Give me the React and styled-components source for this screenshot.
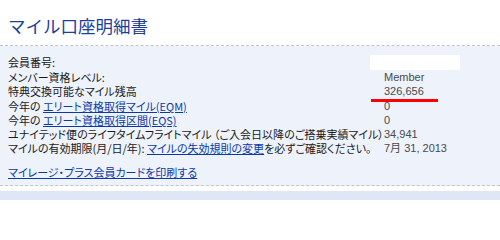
import React from 'react';
import styled, {createGlobalStyle} from 'styled-components';

const GlobalStyle = createGlobalStyle`
  html, body {
    margin: 0;
    padding: 0;
    background: #ffffff;
  }
  body {
    font-family: "Liberation Sans", "Noto Sans CJK JP", sans-serif;
  }
`;

const Page = styled.div`
  width: 500px;
  height: 200px;
  overflow: hidden;
  display: flex;
  flex-direction: column;
`;

const Title = styled.h1`
  margin: 13px 0 0;
  padding: 0 0 6px 8px;
  font-family: "Noto Sans CJK JP", sans-serif;
  font-size: 17.5px;
  font-weight: normal;
  line-height: 26px;
  color: #1c3f9c;
  border-bottom: 1px dashed #c4c4c4;
`;

const Panel = styled.section`
  background: #eef2fa;
  padding: 9px 0 6px 8px;
  border-bottom: 1px dashed #c4c4c4;
`;

const Rows = styled.div`
  display: grid;
  grid-template-columns: 362px 1fr;
`;

const Label = styled.div`
  font-family: "Noto Sans CJK JP", sans-serif;
  font-feature-settings: "palt";
  font-size: 11px;
  line-height: ${(p) => p.$h || 14}px;
  color: #1a1a1a;
  white-space: nowrap;
`;

const Value = styled.div`
  position: relative;
  font-family: "Liberation Sans", "Noto Sans CJK JP", sans-serif;
  font-size: 11px;
  line-height: ${(p) => p.$h || 14}px;
  color: #4a4a4a;
  padding-left: 14px;
  white-space: nowrap;
`;

const InputBox = styled.div`
  width: 90px;
  height: 15px;
  margin-left: -14px;
  background: #ffffff;
`;

// red annotation stroke drawn over the balance
const RedMark = styled.span`
  position: absolute;
  left: 1px;
  top: 15px;
  width: 67px;
  height: 3px;
  background: #ff0000;
`;

const A = styled.a`
  color: #0b3aa8;
  text-decoration: underline;
`;

const PrintLink = styled(A)`
  display: block;
  margin-top: 10px;
  font-family: "Noto Sans CJK JP", sans-serif;
  font-feature-settings: "palt";
  font-size: 11px;
  line-height: 14px;
`;

const Strip = styled.div`
  margin-top: 5px;
  flex: 1;
  background: #dfe7f7;
`;

const rows = [
  {label: '会員番号:', value: <InputBox />},
  {label: 'メンバー資格レベル:', value: 'Member'},
  {label: '特典交換可能なマイル残高', value: (<>326,656<RedMark /></>), h: 15},
  {label: (<>今年の <A href="#">エリート資格取得マイル(EQM)</A></>), value: '0'},
  {label: (<>今年の <A href="#">エリート資格取得区間(EQS)</A></>), value: '0'},
  {label: 'ユナイテッド便のライフタイムフライトマイル （ご入会日以降のご搭乗実績マイル）', value: '34,941'},
  {label: (<>マイルの有効期限(月/日/年): <A href="#">マイルの失効規則の変更</A>を必ずご確認ください。</>), value: '7月 31, 2013'},
];

export default function App() {
  return (
    <Page>
      <GlobalStyle />
      <Title>マイル口座明細書</Title>
      <Panel>
        <Rows>
          {rows.map((r, i) => (
            <React.Fragment key={i}>
              <Label $h={r.h}>{r.label}</Label>
              <Value $h={r.h}>{r.value}</Value>
            </React.Fragment>
          ))}
        </Rows>
        <PrintLink href="#">マイレージ・プラス会員カードを印刷する</PrintLink>
      </Panel>
      <Strip />
    </Page>
  );
}
